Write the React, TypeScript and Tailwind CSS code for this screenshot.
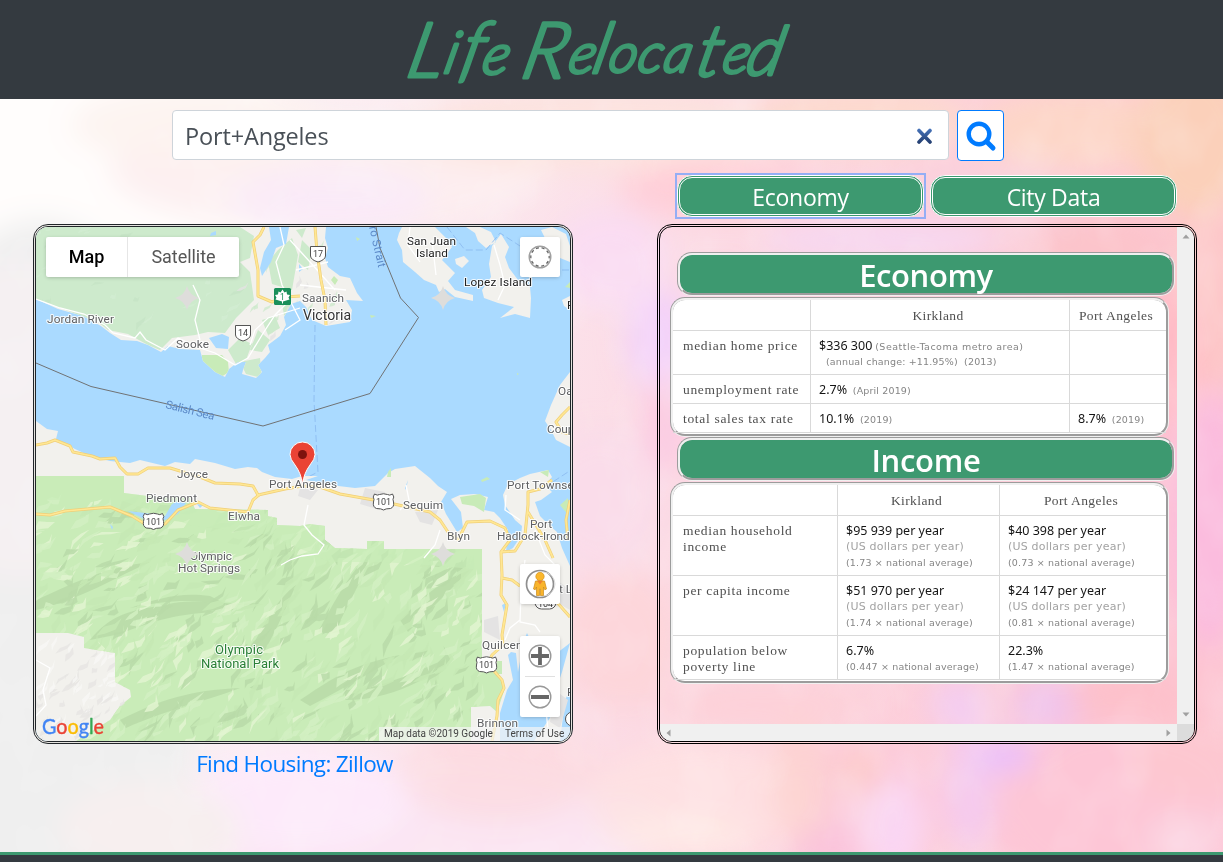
import React from "react";

/* ---------- watercolour backdrop ---------- */
const washes: [number, number, number, number, string, number][] = [
  [60, 180, 240, 200, "#fffdfc", 1],
  [40, 600, 170, 380, "#efefef", 1],
  [20, 420, 110, 160, "#f5f0f2", 0.9],
  [330, 170, 220, 60, "#fdeef0", 0.9],
  [330, 200, 100, 30, "#faeafa", 0.9],
  [200, 125, 130, 40, "#fdf3ef", 0.9],
  [420, 830, 260, 70, "#fbe6f3", 0.9],
  [300, 800, 110, 50, "#fdeafa", 1],
  [150, 830, 90, 50, "#f7efef", 1],
  [500, 770, 100, 50, "#fdd9de", 0.8],
  [600, 130, 200, 40, "#fde3dd", 0.9],
  [610, 260, 60, 50, "#f9dcf3", 0.9],
  [600, 500, 60, 70, "#fadcea", 0.9],
  [620, 640, 60, 70, "#fdd5d9", 0.9],
  [660, 340, 35, 50, "#f2d0fc", 0.9],
  [665, 425, 25, 50, "#fbc9e2", 0.8],
  [720, 190, 100, 30, "#ffcad5", 0.8],
  [860, 120, 110, 34, "#fddacc", 0.9],
  [980, 200, 120, 40, "#fbd0dd", 0.9],
  [1080, 130, 110, 40, "#fdd6c8", 1],
  [1195, 140, 60, 80, "#fbd0ba", 1],
  [880, 240, 120, 20, "#f6d8f3", 0.9],
  [1100, 250, 70, 36, "#fcc3ca", 0.9],
  [1210, 300, 40, 90, "#fdc8c6", 0.9],
  [1210, 520, 40, 130, "#fbbcde", 1],
  [1170, 360, 30, 70, "#ffb8c3", 0.9],
  [760, 705, 110, 26, "#fdd0d8", 0.9],
  [960, 705, 30, 26, "#f3cdf3", 0.9],
  [1050, 705, 40, 26, "#f0c4ee", 0.9],
  [1130, 700, 60, 30, "#fdc0ca", 0.9],
  [1120, 810, 130, 90, "#fdc6d6", 1],
  [1190, 760, 60, 40, "#fdc7cf", 0.9],
  [850, 800, 90, 60, "#fcc9dc", 0.9],
  [700, 800, 110, 60, "#fee1e2", 0.9],
  [800, 780, 30, 60, "#fcd3cf", 0.8],
  [895, 830, 30, 50, "#fad6f3", 1],
  [830, 850, 36, 16, "#f8bedb", 0.7],
  [970, 790, 26, 64, "#f5cbee", 1],
  [1005, 755, 30, 18, "#ebc0fb", 1],
  [860, 770, 22, 24, "#fdc6bf", 0.8],
  [680, 835, 70, 20, "#fdeee6", 0.6],
  [1185, 840, 40, 24, "#fcd7e4", 0.9],
];

function Backdrop() {
  return (
    <svg className="absolute inset-0 h-full w-full" viewBox="0 0 1223 862" preserveAspectRatio="none">
      <defs>
        <filter id="soft" x="-50%" y="-50%" width="200%" height="200%">
          <feGaussianBlur stdDeviation="14" />
        </filter>
        <filter id="paper" x="0" y="0" width="100%" height="100%">
          <feTurbulence type="fractalNoise" baseFrequency="0.018 0.012" numOctaves="3" seed="8" />
          <feColorMatrix values="0 0 0 0 1  0 0 0 0 1  0 0 0 0 1  2.2 0 0 0 -0.9" />
        </filter>
        <linearGradient id="base" x1="0" x2="1" y1="0" y2="0.1">
          <stop offset="0" stopColor="#f8f5f5" />
          <stop offset="0.3" stopColor="#fbeef3" />
          <stop offset="0.6" stopColor="#fcdae4" />
          <stop offset="1" stopColor="#fdc6d3" />
        </linearGradient>
      </defs>
      <rect width="1223" height="862" fill="url(#base)" />
      <g filter="url(#soft)">
        {washes.map(([cx, cy, rx, ry, fill, o], i) => (
          <ellipse key={i} cx={cx} cy={cy} rx={rx} ry={ry} fill={fill} opacity={o} />
        ))}
      </g>
      <rect width="1223" height="862" filter="url(#paper)" opacity="0.18" />
    </svg>
  );
}

/* ---------- map ---------- */
function seeded(seed: number) {
  let s = seed;
  return () => {
    s = (s * 16807) % 2147483647;
    return s / 2147483647;
  };
}

function relief(seed: number, count: number, x0: number, y0: number, w: number, h: number, size: number) {
  const r = seeded(seed);
  const out: { d: string; tone: number }[] = [];
  for (let i = 0; i < count; i++) {
    const x = x0 + r() * w;
    const y = y0 + r() * h;
    const a = -0.45 - r() * 0.75 + (y < 620 ? 0.35 : 0) * (x < 250 ? 1 : 0);
    const l = size * (0.45 + r());
    const t = size * (0.16 + r() * 0.3);
    const bend = (r() - 0.5) * size * 0.7;
    const dx = Math.cos(a);
    const dy = Math.sin(a);
    const p = (u: number, v: number) => `${(x + dx * u - dy * v).toFixed(1)} ${(y + dy * u + dx * v).toFixed(1)}`;
    out.push({
      d: `M${p(-l, bend)}L${p(-l * 0.3, -t)}L${p(l * 0.4, -t * 0.4)}L${p(l, bend - t * 0.7)}L${p(l * 0.3, t * 0.7)}L${p(-l * 0.4, t * 0.4)}Z`,
      tone: r(),
    });
  }
  return out;
}

const parkRelief = relief(77, 700, 36, 500, 450, 242, 12);
const ridges = [
  "M90 640C110 615 130 610 165 605C195 597 215 606 260 603L225 612C180 612 150 622 120 634Z",
  "M36 600C60 590 85 575 130 565L150 562C120 575 80 600 36 610Z",
  "M130 608C170 600 190 598 230 606L210 596C180 592 160 598 130 608Z",
  "M318 632C330 610 350 570 372 552C365 575 345 610 334 634Z",
  "M300 700C330 680 350 665 400 655C380 668 340 690 310 706Z",
  "M120 720C160 700 190 690 240 688C210 700 160 712 126 728Z",
  "M345 690C380 690 420 670 455 655C430 680 390 700 345 700Z",
  "M400 620C420 600 440 580 470 570C450 590 430 610 408 632Z",
  "M250 650C262 630 275 600 296 585C285 610 272 640 258 662Z",
];

const southLand =
  "M36 421L47 429L58 431L56 439L75 449L90 456L110 461L130 463L140 460L165 466L175 462L190 464L195 459L215 463L235 469L248 467L257 468L262 472L275 477L292 479L302 476L318 476L306 480L330 485L355 488L375 486L388 473L395 469L415 466L430 478L438 486L447 492L441 502L446 514L457 532L463 528L461 512L451 499L460 495L475 494L488 497L484 510L494 512L500 518L508 530L506 552L513 548L521 536L522 526L515 520L505 505L503 495L508 484L520 478L530 474L548 470L552 477L545 485L552 492L541 500L535 502L540 516L549 525L557 532L562 548L570 566V741H36Z";

const park =
  "M36 476H124V493L155 497L190 497L195 509L268 510V516L277 518V525L300 526L310 524L325 526V540L335 548L367 549V541H384V549H482V657L497 672L505 688L497 712L490 706L471 707V728L471 741H76L110 720L120 706L131 697L130 690L115 682V653L84 648V637L68 633H36Z";

const vanIsland =
  "M36 299L58 309L83 316L101 326L110 333L121 340L137 341L148 345L161 352L168 346L180 349L200 350L203 361L215 372L225 377L229 369L238 362L246 362L243 370L242 374L256 378L262 372L258 365L265 358L270 352L268 345L280 336L286 325L284 317L291 304L300 301L306 307L312 320L326 326L350 322L352 310L346 300L363 301L357 293L350 278L340 276L328 267L325 258L328 248L325 238L326 227H36Z";

const roads = [
  "M36 445L47 443L55 440L70 446L73 452L92 456L100 459L115 458L120 467L127 474L138 474L148 468L170 468L200 477L215 483L240 484L253 486L258 495L285 489L302 486L320 487L340 494L385 502L430 512L440 520L448 532L458 540",
  "M36 514L50 515L65 511L110 507L132 516L145 524L165 524L178 510L198 502L210 508L248 512L253 500L260 494",
  "M458 540L467 522L490 521L505 528L510 540L501 552L502 575L501 595L507 605L502 635L503 645L492 655L488 664L495 672L502 680L504 688L498 700L497 716L492 741",
  "M501 552L515 551L525 535L528 505L528 492L540 489L552 480",
  "M528 512L545 540L553 558M502 578L512 580L520 586M555 600L570 617",
  "M570 407L562 415L556 422L562 432L570 434",
  "M264 227L260 235L253 242L258 270L258 296L272 302L285 297L300 296",
  "M315 227L317 252L321 280L325 300L326 325",
  "M570 500L566 520L568 540",
];

const minorRoads = [
  "M36 299L60 308L84 314L105 325L113 333L135 338L140 332L146 340L165 350L178 338L200 348L215 353L235 365L248 358L262 335L275 315L290 300",
  "M200 340L195 320L200 300L193 285M280 227L284 245L276 262L282 285L300 320L285 330",
  "M250 345L255 330L268 318L300 308M290 240L310 262L335 290M296 270L328 262M300 285L346 290",
  "M308 505L304 525L312 535L324 545L318 554L302 556L290 560L281 565",
  "M440 530L435 545L424 558M520 620L510 628L505 640M406 485L409 500L400 510",
  "M36 660L50 668L43 690L46 705L36 716M525 560L521 590L520 622L535 625L540 632",
  "M506 495L505 510L520 520M535 530L545 555L560 570M545 700L548 730",
  "M410 227L408 245L420 262M432 240L436 275M494 245L500 265L505 285L498 300",
];

type Label = [string, number, number, number, string];
const labels: Label[] = [
  ["Jordan River", 47, 323, 67, "#5f6062"],
  ["Sooke", 176, 348, 33, "#5f6062"],
  ["Saanich", 302, 302, 42, "#5f6062"],
  ["San Juan", 407, 245, 49, "#222"],
  ["Island", 416, 257, 32, "#222"],
  ["Lopez Island", 464, 286, 68, "#222"],
  ["Joyce", 177, 478, 31, "#5f6062"],
  ["Port Angeles", 269, 488, 68, "#5f6062"],
  ["Piedmont", 146, 502, 51, "#5f6062"],
  ["Elwha", 228, 520, 32, "#5f6062"],
  ["Sequim", 403, 509, 40, "#5f6062"],
  ["Blyn", 447, 540, 23, "#5f6062"],
  ["Port", 530, 528, 22, "#5f6062"],
  ["Hadlock-Irondale", 497, 540, 88, "#5f6062"],
  ["Port Townsend", 507, 489, 80, "#5f6062"],
  ["Oak Harbor", 558, 395, 60, "#5f6062"],
  ["Coupeville", 547, 433, 54, "#5f6062"],
  ["Olympic", 190, 560, 42, "#5f6062"],
  ["Hot Springs", 178, 572, 62, "#5f6062"],
  ["Quilcene", 482, 649, 47, "#5f6062"],
  ["Brinnon", 477, 727, 41, "#5f6062"],
];

function Us101({ x, y, t = "101" }: { x: number; y: number; t?: string }) {
  return (
    <g transform={`translate(${x} ${y})`}>
      <path
        d="M-9 -8Q-6 -6 -4 -7.5Q0 -9 4 -7.5Q6 -6 9 -8L10.3 -5Q8.8 -3 10 0Q11 5 7 6.5Q2 6.5 0 8Q-2 6.5 -7 6.5Q-11 5 -10 0Q-8.8 -3 -10.3 -5Z"
        fill="#fff"
        stroke="#555"
        strokeWidth="1"
      />
      <text y="3.2" textAnchor="middle" fontSize="9" fill="#444">
        {t}
      </text>
    </g>
  );
}

function BcShield({ x, y, t }: { x: number; y: number; t: string }) {
  return (
    <g transform={`translate(${x} ${y})`}>
      <path d="M-7.5 -7.5H7.5V2Q7 6 0 8Q-7 6 -7.5 2Z" fill="#fff" stroke="#555" />
      <text y="3.3" textAnchor="middle" fontSize="9" fill="#444">
        {t}
      </text>
    </g>
  );
}

const Sparkle = ({ x, y }: { x: number; y: number }) => (
  <path
    transform={`translate(${x} ${y})`}
    d="M0 -12Q2.5 -2.5 12 0Q2.5 2.5 0 12Q-2.5 2.5 -12 0Q-2.5 -2.5 0 -12Z"
    fill="#dedddb"
  />
);

function MapCanvas() {
  return (
    <svg className="block h-full w-full font-['Roboto',sans-serif]" viewBox="36 227 534 514">
      <defs>
        <clipPath id="parkClip">
          <path d={park} />
        </clipPath>
        <clipPath id="vanClip">
          <path d={vanIsland} />
        </clipPath>
        <clipPath id="barren">
          <path d="M36 633H68L84 637V648L115 653V682L130 690L131 697L110 720L76 741H36Z" />
        </clipPath>
      </defs>
      <rect x="36" y="227" width="534" height="514" fill="#aadaff" />
      {/* Vancouver Island */}
      <path d={vanIsland} fill="#f2f1ed" />
      <g clipPath="url(#vanClip)">
        <path
          d="M36 227H212L240 227L254 236L250 258L240 262L250 272L254 300L236 318L225 333L208 332L195 335L172 338L160 350L148 345L128 334L108 330L98 322L60 308L36 299Z"
          fill="#cdeacc"
        />
        <path
          d="M228 350L240 338L252 344L246 360L236 364ZM262 320L275 316L280 328L268 335ZM240 362L260 358L262 378L246 374ZM278 250L292 238L298 255L292 290L272 284L268 262ZM302 240L312 250L308 270L298 262ZM258 330L270 340L262 352L250 350ZM296 230L306 228L302 238ZM282 302L292 306L284 316Z"
          fill="#cdeacc"
        />
        <path d="M202 355H222L228 362L229 372L221 377L210 368L202 362ZM334 276L338 280L335 285L331 280Z" fill="#c8ebb8" />
        {relief(19, 34, 36, 227, 210, 100, 7).map((p, i) => (
          <path key={i} d={p.d} fill={p.tone > 0.5 ? "#d8efd6" : "#c0e0c0"} opacity="0.45" />
        ))}
        {relief(31, 30, 235, 240, 110, 110, 6).map((p, i) => (
          <path key={i} d={p.d} fill={p.tone > 0.5 ? "#e3e2e2" : "#cdeacc"} opacity="0.8" />
        ))}
        <path d="M269 227H289L286 244L276 248L271 262L262 276L260 268L264 252L271 240Z" fill="#aadaff" />
        <path d="M209 338L222 334L229 337L228 349L216 348ZM211 233L216 231V235L210 236ZM299 264L303 269L299 272Z" fill="#aadaff" />
      </g>
      {/* San Juan group */}
      <g fill="#f2f1ed">
        <path d="M402 227L399 233L397 240L402 250L403 262L415 272L424 280L436 285L439 292L445 289L455 297L473 301V295L455 290L448 281L455 273L442 260L452 247L446 238L435 227Z" />
        <path d="M455 259L464 256L469 261L462 268L456 264ZM466 227L475 233L478 241L486 248L496 242L491 232L480 227ZM501 234L509 247L505 257L509 268L518 280L530 287L531 298L530 318L515 314L500 318L514 307L498 303L484 298L482 290L491 277L489 264L492 246Z" />
        <path d="M541 230L552 227L566 234L570 246V262L560 258L548 244ZM562 300L570 296V310L564 306Z" />
        <path d="M570 372L560 385L551 405L545 421L551 430L556 440L570 447Z" />
      </g>
      <path d="M356 237L360 239L357 241ZM370 315L376 316L371 318ZM517 373L519 374L517 375ZM481 480L487 477L490 479L482 482ZM565 287L570 282V288Z" fill="#c8ebb8" />
      <g fill="none" stroke="#8dbcf0" strokeWidth="0.9" strokeDasharray="7 3">
        <path d="M315 325L314 400L317 455L318 472L306 478" />
        <path d="M447 227L465 250L486 250L500 233L520 246" />
        <path d="M552 270H570M545 487L568 472" />
      </g>
      {/* Olympic peninsula */}
      <path d={southLand} fill="#f2f1ed" />
      <path d="M500 741V713L507 690L513 680L508 655L511 652L516 653L518 672L524 640L527 633L533 645L548 660L570 643L562 672L557 687L550 718L534 741ZM565 700L570 690V741H560ZM502 605L506 603L504 612Z" fill="#aadaff" />
      <path d={park} fill="#c9ecb8" />
      <g clipPath="url(#parkClip)">
        {ridges.map((d, i) => (
          <path key={i} d={d} fill="#b9dba9" opacity="0.9" />
        ))}
        {parkRelief.map((p, i) => (
          <path
            key={i}
            d={p.d}
            fill={p.tone > 0.84 ? "#e2f4d0" : p.tone > 0.5 ? "#d2f0c2" : p.tone > 0.26 ? "#b8dba8" : "#c5e9b4"}
            opacity="0.85"
          />
        ))}
        <path d="M36 476H124V493L190 497L195 509L268 510V518L325 526V540H384V549H482V570L440 566L384 562L330 562L270 535L190 525L120 500L36 500Z" fill="#c9ecb8" opacity="0.55" />
      </g>
      <g clipPath="url(#barren)">
        {relief(5, 80, 36, 640, 100, 100, 8).map((p, i) => (
          <path key={i} d={p.d} fill={p.tone > 0.5 ? "#f8f7f5" : "#e6e5e2"} opacity="0.8" />
        ))}
      </g>
      <path
        d="M365 488L385 492L380 510L360 504ZM415 512L438 510L432 525L420 522ZM300 488L318 490L310 500L298 496ZM484 620L498 616L500 640L484 632ZM550 575L570 590V610L556 602ZM555 690L568 700L560 728L550 722Z"
        fill="#e4e3e3"
      />
      <path d="M460 497L480 494L486 498L484 512L474 506L462 504ZM388 472L391 468V477H387ZM540 472L549 470L548 477ZM560 505L568 498V515ZM497 661H502V674H496Z" fill="#c8ebb8" />
      <path d="M128 511L145 513L165 516L172 504L180 500L186 503L178 514L165 520L148 521ZM197 504L203 505L200 508ZM406 490L408 480L405 488ZM246 525L244 520ZM110 524L113 527L112 530Z" fill="#aadaff" />
      {minorRoads.map((d, i) => (
        <path key={i} d={d} fill="none" stroke="#fff" strokeWidth="1.3" />
      ))}
      {roads.map((d, i) => (
        <path key={i} d={d} fill="none" stroke="#f0cf78" strokeWidth="3" strokeLinejoin="round" />
      ))}
      {roads.map((d, i) => (
        <path key={i} d={d} fill="none" stroke="#ffe793" strokeWidth="1.7" strokeLinejoin="round" />
      ))}
      <path d="M36 363L91 386.500L263 426L370 393.500L418.500 317.500L400.500 298L380 248L376 227" fill="none" stroke="#707274" strokeWidth="1" />
      <Sparkle x={187} y={298} />
      <Sparkle x={443} y={298} />

      <g stroke="#fff" strokeOpacity="0.85" strokeWidth="2.2" strokeLinejoin="round" paintOrder="stroke" fontSize="11.8">
        {labels.map(([t, x, y, w, c]) => (
          <text key={t} x={x} y={y} textLength={w} fill={c}>
            {t}
          </text>
        ))}
        <text x="303" y="320" fontSize="14" textLength="48" fill="#333">
          Victoria
        </text>
        <text x="215" y="654" fontSize="13" textLength="48" fill="#2a8037">
          Olympic
        </text>
        <text x="201" y="667.500" fontSize="13" textLength="78" fill="#2a8037">
          National Park
        </text>
        <text x="559" y="593" fill="#5f6062">
          t Ludlow
        </text>
        <text x="567" y="309" fill="#222">
          F
        </text>
        <text x="567" y="696" fill="#5f6062">
          Poulsbo
        </text>
      </g>
      <text transform="translate(165 408) rotate(14)" fontSize="11.500" textLength="50" fill="#5b89c8">
        Salish Sea
      </text>
      <text transform="translate(369 227) rotate(77)" fontSize="11.500" textLength="42" fill="#5b89c8">
        ro Strait
      </text>
      <Sparkle x={187} y={554} />
      <Sparkle x={443} y={554} />
      <BcShield x={318} y={254} t="17" />
      <BcShield x={243} y={333} t="14" />
      <rect x="274" y="288" width="17" height="17" rx="1.500" fill="#1a8f5a" />
      <path d="M282.500 289.500L284.500 292.500L286.500 291.500L287 294.500L290 295L288.500 297.500L289.500 299.500L283 301.500V303.500H282V301.500L275.500 299.500L276.500 297.500L275 295L278 294.500L278.500 291.500L280.500 292.500Z" fill="#fff" />
      <text x="282.500" y="299.500" textAnchor="middle" fontSize="8.500" fill="#1a8f5a">
        1
      </text>
      <Us101 x={153.5} y={521.5} />
      <Us101 x={383.5} y={502} />
      <Us101 x={486.5} y={665} />
      <g fill="#fff" stroke="#555">
        <rect x="535" y="596" width="21" height="13" rx="6.500" />
        <rect x="565.500" y="712" width="21" height="14" rx="7" />
      </g>
      <text x="545.500" y="607" textAnchor="middle" fontSize="9" fill="#333">
        104
      </text>
      <path
        d="M302.500 484Q301 473 295 465Q290 459 290 454.500A12.500 12.500 0 0 1 315 454.500Q315 459 310 465Q304 473 302.500 484Z"
        fill="#ea4335"
        stroke="#fff"
        strokeWidth="1"
      />
      <circle cx="302.500" cy="454.500" r="4.500" fill="#7e130e" />
    </svg>
  );
}

function MapControls() {
  return (
    <>
      <div className="absolute left-[10px] top-[10px] flex h-[40px] rounded-[2px] bg-white text-center font-['Roboto',sans-serif] text-[18px] leading-[40px] shadow-[0_1px_4px_-1px_rgba(0,0,0,0.3)]">
        <div className="w-[82px] border-r border-[#e6e6e6] font-medium text-black">Map</div>
        <div className="w-[111px] tracking-[-0.05px] text-[#565656]">Satellite</div>
      </div>
      <div className="absolute left-[484px] top-[10px] flex h-[40px] w-[40px] items-center justify-center rounded-[2px] bg-white shadow-[0_1px_4px_-1px_rgba(0,0,0,0.3)]">
        <svg className="h-[26px] w-[26px]" viewBox="-13 -13 26 26" fill="none">
          <circle r="10.800" stroke="#a0a0a0" strokeWidth="1.400" />
          <circle r="9.200" stroke="#666" strokeWidth="1.300" strokeDasharray="3 2.780" strokeDashoffset="1.500" />
        </svg>
      </div>
      <div className="absolute left-[484px] top-[337px] flex h-[40px] w-[40px] items-center justify-center rounded-[2px] bg-white shadow-[0_1px_4px_-1px_rgba(0,0,0,0.3)]">
        <svg className="h-[32px] w-[32px]" viewBox="-16 -16 32 32">
          <circle r="13.500" fill="#fff" stroke="#8f8f8f" strokeWidth="1.700" />
          <path d="M3 -12A12 12 0 0 1 3 12" fill="none" stroke="#ddd" strokeWidth="1" />
          <path d="M-4.500 -3H4.500L6.500 5L4.800 5.800L3.500 3V11.500H0.400V5H-0.400V11.500H-3.500V3L-4.800 5.800L-6.500 5Z" fill="#f9b42b" stroke="#c98a1a" strokeWidth="0.700" />
          <path d="M-3 -3.500H3L0 0.500Z" fill="#ef7f2f" />
          <circle cy="-7.500" r="4.200" fill="#fbb72c" stroke="#c98a1a" strokeWidth="0.600" />
        </svg>
      </div>
      <div className="absolute left-[484px] top-[409px] flex h-[81px] w-[40px] flex-col items-center rounded-[2px] bg-white shadow-[0_1px_4px_-1px_rgba(0,0,0,0.3)]">
        <div className="flex h-[40px] items-center">
          <svg className="h-[26px] w-[26px]" viewBox="-13 -13 26 26">
            <circle r="10.800" fill="#fff" stroke="#999" strokeWidth="1.400" />
            <path d="M-9 0H9M0 -9V9" stroke="#666" strokeWidth="3.800" />
          </svg>
        </div>
        <div className="h-px w-[30px] bg-[#e0e0e0]" />
        <div className="flex h-[40px] items-center">
          <svg className="h-[26px] w-[26px]" viewBox="-13 -13 26 26">
            <circle r="10.800" fill="#fff" stroke="#999" strokeWidth="1.400" />
            <path d="M-9 0H9" stroke="#666" strokeWidth="3.800" />
          </svg>
        </div>
      </div>
      <svg className="absolute left-[4px] top-[486px] h-[28px] w-[70px]">
        <text
          x="2"
          y="21"
          fontSize="21"
          textLength="62"
          lengthAdjust="spacingAndGlyphs"
          strokeLinejoin="round"
          strokeWidth="0.400"
          className="font-['Lato',sans-serif]"
        >
          <tspan fill="#4285f4" stroke="#4285f4">G</tspan>
          <tspan fill="#ea4335" stroke="#ea4335">o</tspan>
          <tspan fill="#fbbc05" stroke="#fbbc05">o</tspan>
          <tspan fill="#4285f4" stroke="#4285f4">g</tspan>
          <tspan fill="#34a853" stroke="#34a853">l</tspan>
          <tspan fill="#ea4335" stroke="#ea4335">e</tspan>
        </text>
      </svg>
      <div className="absolute bottom-0 right-0 flex h-[14px] w-[191px] items-center whitespace-nowrap bg-[#f5f5f5]/70 font-['Roboto',sans-serif] text-[10px] leading-[14px] text-[#444]">
        <span className="ml-[5px] w-[121px]">Map data ©2019 Google</span>
        <span>Terms of Use</span>
      </div>
    </>
  );
}

/* ---------- data tables ---------- */
function Cell({ children, last = false }: { children?: React.ReactNode; last?: boolean }) {
  return (
    <div
      className={`whitespace-nowrap border-b border-[#d9d9d9] pl-[8px] pt-[7px] font-['Noto_Sans',sans-serif] text-[11px] leading-[16px] ${last ? "" : "border-r"}`}
    >
      {children}
    </div>
  );
}

const Name = ({ children }: { children: React.ReactNode }) => (
  <div className="pl-[2px] font-['Liberation_Serif',serif] text-[13.500px] leading-[15.500px] tracking-[0.68px] text-[#505050]">{children}</div>
);
const City = ({ children }: { children: React.ReactNode }) => (
  <div className="-ml-[8px] pr-[4px] pt-[1px] text-center font-['Liberation_Serif',serif] text-[13.500px] tracking-[0.4px] text-[#505050]">{children}</div>
);
const Num = ({ children }: { children: React.ReactNode }) => (
  <span className="text-[12.500px] leading-[12px] text-[#151515]">{children}</span>
);
const Small = ({ children, wide = false }: { children: React.ReactNode; wide?: boolean }) => (
  <span className={`font-['DejaVu_Sans',sans-serif] text-[9.500px] leading-[10px] text-[#858585] ${wide ? "tracking-[0.48px]" : "tracking-[0.15px]"}`}>
    {children}
  </span>
);

function Income({ value, ratio }: { value: string; ratio: string }) {
  return (
    <>
      <div className="h-[16px]">
        <Num>{value} per year</Num>
      </div>
      <div className="h-[16px] font-['DejaVu_Sans',sans-serif] tracking-[0.2px] text-[#a3a3a3]">(US dollars per year)</div>
      <div className="-mt-[1px] h-[16px]">
        <Small>({ratio} × national average)</Small>
      </div>
    </>
  );
}

const Heading = ({ children, className }: { children: React.ReactNode; className: string }) => (
  <h2
    className={`ml-[17px] h-[44px] w-[498px] rounded-[15px] border-[3px] border-[#f0f0f0] bg-[#3d9970] text-center font-['Open_Sans',sans-serif] text-[31px] font-semibold leading-[41px] text-white [border-style:groove] ${className}`}
  >
    {children}
  </h2>
);

function DataPanel() {
  return (
    <section className="grid h-[520px] w-[540px] grid-cols-[517px_17px] grid-rows-[497px_17px] overflow-hidden rounded-[15px] border-[3px] border-double border-black">
      <div className="pt-[25px]">
        <Heading className="tracking-[-0.4px]">Economy</Heading>
        <div className="ml-[10px] mt-px grid h-[140px] w-[499px] grid-cols-[138px_259px_96px] grid-rows-[31px_44px_29px_29px] rounded-[15px] border-[3px] border-[#f0f0f0] bg-white [border-style:groove]">
          <Cell />
          <Cell>
            <City>Kirkland</City>
          </Cell>
          <Cell last>
            <City>Port Angeles</City>
          </Cell>
          <Cell>
            <Name>median home price</Name>
          </Cell>
          <Cell>
            <div className="h-[16px]">
              <Num>$336 300</Num> <Small wide>(Seattle-Tacoma metro area)</Small>
            </div>
            <div className="-mt-px h-[16px] pl-[7px]">
              <Small>(annual change: +11.95%)&nbsp; (2013)</Small>
            </div>
          </Cell>
          <Cell last />
          <Cell>
            <Name>unemployment rate</Name>
          </Cell>
          <Cell>
            <Num>2.7%</Num>&nbsp; <Small>(April 2019)</Small>
          </Cell>
          <Cell last />
          <Cell>
            <Name>total sales tax rate</Name>
          </Cell>
          <Cell>
            <Num>10.1%</Num>&nbsp; <Small>(2019)</Small>
          </Cell>
          <Cell last>
            <Num>8.7%</Num>&nbsp; <Small>(2019)</Small>
          </Cell>
        </div>
        <Heading className="tracking-[-0.3px]">Income</Heading>
        <div className="ml-[10px] mt-px grid h-[202px] w-[499px] grid-cols-[165px_162px_166px] grid-rows-[31px_60px_60px_44px] rounded-[15px] border-[3px] border-[#f0f0f0] bg-white [border-style:groove]">
          <Cell />
          <Cell>
            <City>Kirkland</City>
          </Cell>
          <Cell last>
            <City>Port Angeles</City>
          </Cell>
          <Cell>
            <Name>
              median household
              <br />
              income
            </Name>
          </Cell>
          <Cell>
            <Income value="$95 939" ratio="1.73" />
          </Cell>
          <Cell last>
            <Income value="$40 398" ratio="0.73" />
          </Cell>
          <Cell>
            <Name>per capita income</Name>
          </Cell>
          <Cell>
            <Income value="$51 970" ratio="1.74" />
          </Cell>
          <Cell last>
            <Income value="$24 147" ratio="0.81" />
          </Cell>
          <Cell>
            <Name>
              population below
              <br />
              poverty line
            </Name>
          </Cell>
          <Cell>
            <div className="h-[16px]">
              <Num>6.7%</Num>
            </div>
            <div className="-mt-px h-[16px]">
              <Small>(0.447 × national average)</Small>
            </div>
          </Cell>
          <Cell last>
            <div className="h-[16px]">
              <Num>22.3%</Num>
            </div>
            <div className="-mt-px h-[16px]">
              <Small>(1.47 × national average)</Small>
            </div>
          </Cell>
        </div>
      </div>
      <div className="flex flex-col items-center justify-between bg-[#f0f0f0] py-[7px]">
        <svg className="h-[5px] w-[8px]" viewBox="0 0 8 5">
          <path d="M0.500 4.500L4 0.500L7.500 4.500Z" fill="#a0a0a0" />
        </svg>
        <svg className="h-[5px] w-[8px]" viewBox="0 0 8 5">
          <path d="M0.500 0.500L4 4.500L7.500 0.500Z" fill="#a0a0a0" />
        </svg>
      </div>
      <div className="flex items-center justify-between bg-[#f0f0f0] px-[6px]">
        <svg className="h-[8px] w-[5px]" viewBox="0 0 5 8">
          <path d="M4.500 0.500L0.500 4L4.500 7.500Z" fill="#a0a0a0" />
        </svg>
        <svg className="h-[8px] w-[5px]" viewBox="0 0 5 8">
          <path d="M0.500 0.500L4.500 4L0.500 7.500Z" fill="#a0a0a0" />
        </svg>
      </div>
      <div className="bg-[#dcdcdc]" />
    </section>
  );
}

/* ---------- page ---------- */
const tabClass =
  "block h-[42px] w-[247px] rounded-[15px] border-[3px] border-double border-white bg-[#3d9970] leading-[38px] tracking-[-0.3px]";

export default function App() {
  return (
    <div className="relative isolate flex h-[862px] w-[1223px] flex-col overflow-hidden font-['Open_Sans',sans-serif]">
      <div className="absolute inset-0 -z-10">
        <Backdrop />
      </div>
      <header className="flex h-[98.500px] shrink-0 justify-center bg-[#343a40]">
        <svg className="h-[98px] w-[460px]" viewBox="381.5 0 460 98" role="heading" aria-label="Life Relocated">
          <g transform="translate(0 76) skewX(-13) translate(0 -76)">
            <text
              fill="#3d9970"
              stroke="#3d9970"
              strokeWidth="3.200"
              strokeLinejoin="round"
              className="font-['Lato',sans-serif] font-light italic"
            >
              <tspan fontSize="76" x="404" y="77">L</tspan>
              <tspan fontSize="58" x="441" y="73">i</tspan>
              <tspan fontSize="72" x="457" y="73">f</tspan>
              <tspan fontSize="56" x="479" y="74">e </tspan>
              <tspan fontSize="78" x="519" y="78">R</tspan>
              <tspan fontSize="56" x="565" y="73">e</tspan>
              <tspan fontSize="70" x="589" y="73">l</tspan>
              <tspan fontSize="54" x="605 634 660" y="72">oca</tspan>
              <tspan fontSize="72" x="693" y="76">t</tspan>
              <tspan fontSize="56" x="719" y="73">e</tspan>
              <tspan fontSize="68" x="743" y="75">d</tspan>
            </text>
          </g>
        </svg>
      </header>

      <form className="ml-[172px] flex pt-[11.500px]">
        <div className="flex h-[50px] w-[777px] items-center rounded-[4px] border border-[#ced4da] bg-white pl-[12px] pr-[15px]">
          <input
            className="min-w-0 flex-1 pt-[3px] text-[23.500px] tracking-[-0.15px] text-[#495057] outline-none"
            defaultValue="Port+Angeles"
          />
          <svg className="h-[17px] w-[17px]" viewBox="0 0 17 17">
            <defs>
              <linearGradient id="cross" x1="0" x2="0" y1="0" y2="17" gradientUnits="userSpaceOnUse">
                <stop offset="0" stopColor="#4a7ac4" />
                <stop offset="1" stopColor="#213a6b" />
              </linearGradient>
            </defs>
            <path d="M3 3.500L14 15M14 3.500L3 15" stroke="url(#cross)" strokeWidth="3.600" strokeLinecap="round" />
          </svg>
        </div>
        <button type="button" className="ml-[8px] flex h-[51px] w-[47px] items-center justify-center rounded-[4px] border border-[#007bff] bg-white">
          <svg className="h-[32px] w-[32px]" viewBox="0 0 32 32" fill="none" stroke="#007bff" strokeLinecap="round">
            <circle cx="14" cy="14" r="10.300" strokeWidth="4.400" />
            <path d="M21.500 21.500L28 28" strokeWidth="5" />
          </svg>
        </button>
      </form>

      <nav className="ml-[677px] mt-[14px] flex gap-[6px] text-[23px] text-white">
        <span className="outline-2 outline-[#94aef5]">
          <button type="button" className={tabClass}>
            Economy
          </button>
        </span>
        <button type="button" className={tabClass}>
          City Data
        </button>
      </nav>

      <main className="mt-[7px] flex pl-[33px]">
        <div className="w-[540px]">
          <section className="relative h-[520px] overflow-hidden rounded-[15px] border-[3px] border-double border-[#212529] bg-[#e5e3df]">
            <MapCanvas />
            <MapControls />
          </section>
          <a href="#housing" className="mt-[3.500px] block pr-[17px] text-center text-[22.500px] leading-[32px] tracking-[-0.65px] text-[#007bff]">
            Find Housing: Zillow
          </a>
        </div>
        <div className="ml-[84px]">
          <DataPanel />
        </div>
      </main>
      <footer className="mt-auto h-[10px] shrink-0 border-t-[3px] border-[#3d9970] bg-[#343a40]" />
    </div>
  );
}
